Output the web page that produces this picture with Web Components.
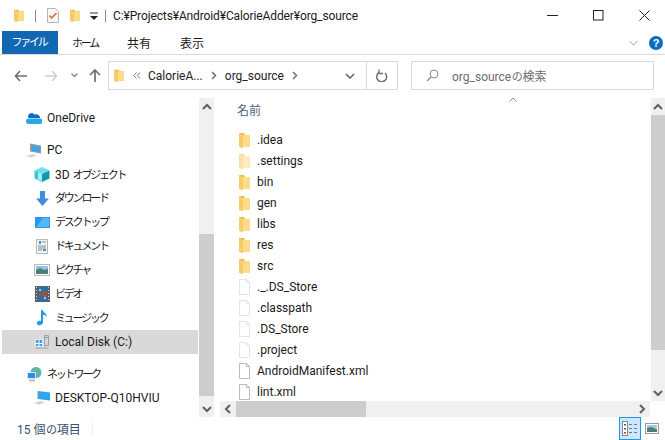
<!DOCTYPE html>
<html>
<head>
<meta charset="utf-8">
<style>
html, body { margin: 0; height: 100%; background: #fff; overflow: hidden; }
body { font: 12px Roboto, "Noto Sans CJK JP", sans-serif; color: #1a1a1a; }
</style>
</head>
<body>
<explorer-window></explorer-window>
<script>
const folder = (w, h, op) => `<svg width="${w}" height="${h}" viewBox="0 0 11 16" preserveAspectRatio="none" style="display:block;flex:none" opacity="${op || 1}"><path d="M0 1h5l1 2h5v11.500H3V16L0 14.500z" fill="#e9bb55"/><path d="M4 3h7v11.500H4z" fill="#fcdc88"/><path d="M0 1l4 2v13l-4-1.500z" fill="#f6cd66"/></svg>`;
const FILE = `<svg width="11" height="16" viewBox="0 0 11 16" style="display:block"><path d="M.5 .5h7l3 3v12H.5z" fill="#fff" stroke="#bdbdbd"/><path d="M7.500 .5v3h3" fill="none" stroke="#bdbdbd"/></svg>`;
const PALE_FILE = `<svg width="11" height="16" viewBox="0 0 11 16" style="display:block"><path d="M.5 .5h7l3 3v12H.5z" fill="#fff" stroke="#e4e4e4"/><path d="M7.500 .5v3h3" fill="none" stroke="#e4e4e4"/></svg>`;

const NAV_ICONS = {
  onedrive: `<svg width="16" height="12" viewBox="0 0 16 12"><path d="M2.500 6a3.500 3.500 0 0 1 6-3.500A4 4 0 0 1 14 6z" fill="#0f6cbd"/><path d="M3 12a2.800 2.800 0 0 1-.5-5.600h11a2.800 2.800 0 0 1 .5 5.600z" fill="#28a8ea"/></svg>`,
  pc: `<svg width="16" height="15" viewBox="0 0 16 15"><path d="M4 .5l11 2v8l-11-2z" fill="#8b9aa8"/><path d="M6 2.500l8 1.400v5.100L6 7.800z" fill="#35a7f2"/><path d="M0 13l6-2 5 1.300-6 2.500z" fill="#d5d8da"/></svg>`,
  cube: `<svg width="16" height="15" viewBox="0 0 16 15"><path d="M8 0l7.500 3.500L8 7 .5 3.500z" fill="#6fe0ec"/><path d="M.5 3.500L8 7v8L.5 11.500z" fill="#3fc5d6"/><path d="M4 5.500L8 7v7L4 12.500z" fill="#a9eef3"/><path d="M15.500 3.500L8 7v8l7.500-3.500z" fill="#0f97ae"/></svg>`,
  down: `<svg width="13" height="15" viewBox="0 0 13 15"><path d="M4 0h5v7.500h4L6.500 15 0 7.500h4z" fill="#3f8fdc"/></svg>`,
  desktop: `<svg width="15" height="11" viewBox="0 0 15 11"><rect x=".5" y=".5" width="14" height="10" fill="#1e9bf0" stroke="#3f8fdc"/><path d="M1 10 8 1h6v9z" fill="#52b6f7"/></svg>`,
  doc: `<svg width="12" height="15" viewBox="0 0 12 15"><path d="M.5 .5h11v14H.5z" fill="#f4f4f4" stroke="#b5b5b5"/><path d="M3 2h2v3H3z" fill="#3f8fdc"/><path d="M6 3h4M2 7h8M2 9h8M2 11h4" stroke="#7d8c99"/><path d="M7 10h3v2H7z" fill="#3f8fdc"/></svg>`,
  picture: `<svg width="16" height="12" viewBox="0 0 16 12"><rect x=".5" y=".5" width="15" height="11" fill="#fff" stroke="#b5bac0"/><path d="M2 2h12v5H2z" fill="#8fc3ea"/><path d="M2 6l4-2 4 2 4-1v5H2z" fill="#4f7f73"/></svg>`,
  video: `<svg width="15" height="16" viewBox="0 0 15 16"><rect width="15" height="16" fill="#5a5f66"/><rect x="3" y="1" width="9" height="14" fill="#2a6fb5"/><path d="M3 8h4l1-3 4 1v4H3z" fill="#a44f2e"/><path d="M4 3h2v2H4zM9 11h2v2H9z" fill="#e6c83c"/><path d="M1.500 1v14M13.500 1v14" stroke="#d5d5d5" stroke-dasharray="1 2"/></svg>`,
  music: `<svg width="12" height="16" viewBox="0 0 12 16"><path d="M5 0h1.500c.5 2.500 4.500 3 4.500 7-1-1.500-2.500-2-4-2.200V12.500C7 15 2 16.500 1 14s2-4 4-3z" fill="#1e9bf0"/></svg>`,
  disk: `<svg width="16" height="16" viewBox="0 0 16 16"><path d="M10.500 1.500h4v10h-4z" fill="#d5d8db" stroke="#9aa1a7"/><path d="M11.500 3.500h2" stroke="#6d767d"/><rect x="1.500" y="5.500" width="7" height="7" fill="#3c9ee6" stroke="#e8e8e8"/><path d="M5 6v7M1 9.500h7" stroke="#fff"/><path d="M1 13h12l2 2H2z" fill="#b8bcc0"/></svg>`,
  network: `<svg width="15" height="15" viewBox="0 0 15 15"><circle cx="9" cy="5.500" r="5.500" fill="#56aee8"/><path d="M6 2l4-2 2 3-3 2zM10 7l3-2 1 2-3 2z" fill="#6bbf59"/><path d="M.5 5.500h8v6h-8z" fill="#2a8fe0" stroke="#dfe7ee"/><path d="M2 13.500h6" stroke="#b8bcc0" stroke-width="2"/></svg>`,
  monitor: `<svg width="16" height="14" viewBox="0 0 16 14"><path d="M4 0l12 1.500v8L4 8z" fill="#2fa4f0"/><path d="M4 0v8" stroke="#8b9aa8"/><path d="M0 12l6-2 5 1.500-6 2.200z" fill="#cfd3d6"/></svg>`
};

class KanaText extends HTMLElement {
  constructor() {
    super();
    this.attachShadow({ mode: 'open' });
    this.shadowRoot.innerHTML = `
<style>
:host { display: inline; font-size: 11px; letter-spacing: -2.200px; margin-right: 2px; margin-bottom: 2px; }
</style>
<slot></slot>`;
  }
}
customElements.define('kana-text', KanaText);

class NavItem extends HTMLElement {
  constructor() {
    super();
    this.attachShadow({ mode: 'open' });
    this.shadowRoot.innerHTML = `
<style>
:host { display: flex; align-items: center; height: 24px; padding-left: var(--indent, 32px); font-size: 12px; white-space: nowrap; }
:host([selected]) { background: #d9d9d9; }
.ic { width: 16px; height: 16px; display: flex; align-items: center; justify-content: center; margin-right: 5px; flex: none; }
</style>
<span class="ic">${NAV_ICONS[this.getAttribute('icon')] || ''}</span><slot></slot>`;
  }
}
customElements.define('nav-item', NavItem);

class FileRow extends HTMLElement {
  constructor() {
    super();
    this.attachShadow({ mode: 'open' });
    const kind = this.getAttribute('kind');
    const icon = { folder: folder(11, 16), 'pale-folder': folder(11, 16, .55), file: FILE, 'pale-file': PALE_FILE }[kind];
    this.shadowRoot.innerHTML = `
<style>
:host { display: flex; align-items: center; height: 21px; font-size: 12px; white-space: nowrap; }
.ic { width: 11px; height: 16px; margin-right: 7px; flex: none; }
</style>
<span class="ic">${icon}</span><slot></slot>`;
  }
}
customElements.define('file-row', FileRow);

class ScrollBar extends HTMLElement {
  constructor() {
    super();
    this.attachShadow({ mode: 'open' });
    const horizontal = this.hasAttribute('horizontal');
    const a = horizontal ? 'M7 1 3 5l4 4' : 'M1 7l4-4 4 4';
    const b = horizontal ? 'M3 1l4 4-4 4' : 'M1 3l4 4 4-4';
    this.shadowRoot.innerHTML = `
<style>
:host { display: flex; flex-direction: ${horizontal ? 'row' : 'column'}; background: #f0f0f0; flex: none; ${horizontal ? 'height: 16px;' : 'width: var(--bar, 15px);'} }
.arrow { ${horizontal ? 'width: 16px;' : 'height: 17px;'} flex: none; display: flex; align-items: center; justify-content: center; }
.arrow svg { display: block; }
.track { flex: 1; display: flex; flex-direction: ${horizontal ? 'row' : 'column'}; }
.before { flex: none; ${horizontal ? 'width' : 'height'}: var(--before, 0); }
.thumb { flex: none; background: #cdcdcd; ${horizontal ? 'width' : 'height'}: var(--thumb, 100px); }
</style>
<span class="arrow"><svg width="10" height="10" viewBox="0 0 10 10"><path d="${a}" fill="none" stroke="#606060" stroke-width="2"/></svg></span>
<div class="track"><div class="before"></div><div class="thumb"></div></div>
<span class="arrow"><svg width="10" height="10" viewBox="0 0 10 10"><path d="${b}" fill="none" stroke="#606060" stroke-width="2"/></svg></span>`;
  }
}
customElements.define('scroll-bar', ScrollBar);

class TitleBar extends HTMLElement {
  constructor() {
    super();
    this.attachShadow({ mode: 'open' });
    this.shadowRoot.innerHTML = `
<style>
:host { display: flex; align-items: center; height: 31px; flex: none; font-size: 12px; padding-left: 14px; }
.q { display: flex; align-items: center; }
.sep { width: 1px; height: 12px; background: #8a8a8a; }
.path { margin-left: 7px; flex: 1; white-space: nowrap; letter-spacing: -.12px; }
.btn { width: 46px; height: 31px; display: flex; align-items: center; justify-content: center; flex: none; }
.btn:last-child { margin-right: -2px; }
svg { display: block; }
</style>
<span class="q">${folder(10, 13)}</span>
<span class="sep" style="margin-left:11px"></span>
<span class="q" style="margin-left:11px"><svg width="12" height="15" viewBox="0 0 12 15"><path d="M.5 .5h8l3 3v11H.5z" fill="#f8f8f8" stroke="#b5b5b5"/><path d="M2.500 7.500l2 2.500 5-5" fill="none" stroke="#e0602a" stroke-width="1.500"/></svg></span>
<span class="q" style="margin-left:11px">${folder(10, 13)}</span>
<span class="q" style="margin-left:9px"><svg width="10" height="8" viewBox="0 0 10 8"><path d="M1 1h8" stroke="#333"/><path d="M1 4h8L5 8z" fill="#222"/></svg></span>
<span class="sep" style="margin-left:6px"></span>
<span class="path">C:¥Projects¥Android¥CalorieAdder¥org_source</span>
<span class="btn"><svg width="11" height="1"><rect width="11" height="1" fill="#222"/></svg></span>
<span class="btn"><svg width="11" height="11"><rect x=".5" y=".5" width="9.500" height="9.500" fill="none" stroke="#222"/></svg></span>
<span class="btn"><svg width="11" height="11"><path d="M.5 .5l10 10M10.500 .5l-10 10" stroke="#222"/></svg></span>`;
  }
}
customElements.define('title-bar', TitleBar);

class RibbonTabs extends HTMLElement {
  constructor() {
    super();
    this.attachShadow({ mode: 'open' });
    this.shadowRoot.innerHTML = `
<style>
:host { display: flex; align-items: center; height: 24px; box-sizing: border-box; flex: none; font-size: 12px; padding-left: 2px; border-bottom: 1px solid #dadada; }
.tab { width: 50px; text-align: center; margin-top: -1px; }
.tab.file { width: 56px; height: 23px; line-height: 23px; background: #1167b1; color: #fff; margin: 0 3px 0 0; }
.gap { flex: 1; }
svg { display: block; }
.help { width: 14px; height: 14px; border-radius: 50%; background: #0f6cbd; color: #fff; font: bold 11px/14px "Liberation Sans", sans-serif; text-align: center; margin: 0 2px 0 11px; }
</style>
<span class="tab file"><kana-text>ファイル</kana-text></span><span class="tab"><kana-text>ホーム</kana-text></span><span class="tab" style="margin-left:3px">共有</span><span class="tab" style="margin-left:3px">表示</span>
<span class="gap"></span>
<svg width="9" height="6" viewBox="0 0 9 6"><path d="M.5 1l4 4 4-4" fill="none" stroke="#9a9a9a"/></svg>
<span class="help">?</span>`;
  }
}
customElements.define('ribbon-tabs', RibbonTabs);

class AddressRow extends HTMLElement {
  constructor() {
    super();
    this.attachShadow({ mode: 'open' });
    const chev = `<svg width="6" height="9" viewBox="0 0 6 9"><path d="M1 1l3.500 3.500L1 8" fill="none" stroke="#707070" stroke-width="1.500"/></svg>`;
    this.shadowRoot.innerHTML = `
<style>
:host { display: flex; align-items: center; height: 29px; margin-top: 6px; flex: none; font-size: 12px; padding: 0 11px 0 0; }
.nav { width: 108px; display: flex; align-items: center; flex: none; padding-left: 14px; box-sizing: border-box; }
.box { border: 1px solid #d9d9d9; height: 29px; box-sizing: border-box; display: flex; align-items: center; }
.addr { width: 290px; flex: none; padding-left: 5px; color: #222; }
.addr .txt { white-space: nowrap; }
.grow { flex: 1; }
.drop { width: 33px; display: flex; justify-content: center; }
.refresh { width: 30px; height: 27px; border-left: 1px solid #d9d9d9; display: flex; align-items: center; justify-content: center; }
.search { width: 243px; flex: none; margin-left: 13px; padding-left: 14px; color: #6d6d6d; white-space: nowrap; }
svg { display: block; flex: none; }
</style>
<div class="nav">
<svg width="14" height="12" viewBox="0 0 14 12"><path d="M6 1 1.500 6 6 11M2 6h11" fill="none" stroke="#6f6f6f" stroke-width="1.600"/></svg>
<svg style="margin-left:16px" width="14" height="12" viewBox="0 0 14 12"><path d="M8 1l4.500 5L8 11M12 6H1" fill="none" stroke="#cfcfcf" stroke-width="1.600"/></svg>
<svg style="margin-left:13px" width="7" height="5" viewBox="0 0 7 5"><path d="M.5 .5l3 3 3-3" fill="none" stroke="#8a8a8a" stroke-width="1.300"/></svg>
<svg style="margin-left:11px" width="12" height="13" viewBox="0 0 12 13"><path d="M1 6l5-5 5 5M6 1v12" fill="none" stroke="#6f6f6f" stroke-width="1.700"/></svg>
</div>
<div class="box addr">
${folder(10, 13)}
<svg style="margin-left:9px" width="8" height="7" viewBox="0 0 8 7"><path d="M3.500 .5 .8 3.500l2.700 3M7 .5 4.300 3.500l2.700 3" fill="none" stroke="#808080"/></svg>
<span class="txt" style="margin-left:7px">CalorieA...</span>
<span style="margin-left:8px">${chev}</span>
<span class="txt" style="margin-left:8px">org_source</span>
<span style="margin-left:8px">${chev}</span>
<span class="grow"></span>
<span class="drop"><svg width="10" height="6" viewBox="0 0 10 6"><path d="M1 1l4 4 4-4" fill="none" stroke="#666" stroke-width="1.600"/></svg></span>
<span class="refresh"><svg width="12" height="13" viewBox="0 0 12 13"><path d="M3 2.500a5 5 0 1 0 6 .5" fill="none" stroke="#707070" stroke-width="1.500" transform="translate(0 1)"/><path d="M3 .5v4h4" fill="none" stroke="#707070" stroke-width="1.300"/></svg></span>
</div>
<div class="box search">
<svg width="13" height="13" viewBox="0 0 13 13"><circle cx="8" cy="5" r="4" fill="none" stroke="#8f8f8f"/><path d="M5 8l-4 4" stroke="#b08a60" stroke-width="1.400"/></svg>
<span style="margin-left:13px">org_source<kana-text>の</kana-text>検索</span>
</div>`;
  }
}
customElements.define('address-row', AddressRow);

class NavPane extends HTMLElement {
  constructor() {
    super();
    this.attachShadow({ mode: 'open' });
    this.shadowRoot.innerHTML = `
<style>
:host { display: flex; width: 214px; flex: none; padding-top: 3px; box-sizing: border-box; }
.list { flex: 1; min-width: 0; padding: 8px 1px 0 2px; }
.top { --indent: 24px; }
.space { height: 8px; }
scroll-bar { --before: 119px; --thumb: 162px; }
</style>
<div class="list">
<nav-item class="top" icon="onedrive">OneDrive</nav-item>
<div class="space"></div>
<nav-item class="top" icon="pc">PC</nav-item>
<nav-item icon="cube"><span>3D <kana-text>オブジェクト</kana-text></span></nav-item>
<nav-item icon="down"><kana-text>ダウンロード</kana-text></nav-item>
<nav-item icon="desktop"><kana-text>デスクトップ</kana-text></nav-item>
<nav-item icon="doc"><kana-text>ドキュメント</kana-text></nav-item>
<nav-item icon="picture"><kana-text>ピクチャ</kana-text></nav-item>
<nav-item icon="video"><kana-text>ビデオ</kana-text></nav-item>
<nav-item icon="music"><kana-text>ミュージック</kana-text></nav-item>
<nav-item icon="disk" selected>Local Disk (C:)</nav-item>
<div class="space"></div>
<nav-item class="top" icon="network"><kana-text>ネットワーク</kana-text></nav-item>
<nav-item icon="monitor">DESKTOP-Q10HVIU</nav-item>
</div>
<scroll-bar></scroll-bar>`;
  }
}
customElements.define('nav-pane', NavPane);

class FileList extends HTMLElement {
  constructor() {
    super();
    this.attachShadow({ mode: 'open' });
    this.shadowRoot.innerHTML = `
<style>
:host { display: flex; flex: 1; min-width: 0; flex-direction: column; position: relative; }
.main { flex: 1; display: flex; min-height: 0; }
.body { flex: 1; min-width: 0; padding: 1px 0 0 25px; }
.head { height: 26px; display: flex; align-items: center; font-size: 12px; color: #4c607a; margin-left: -2px; margin-bottom: 7px; }
.sort { position: absolute; left: 295px; top: 2px; }
scroll-bar.v { --bar: 14px; --before: 0px; --thumb: 235px; margin-top: 3px; }
scroll-bar.h { margin: 0 15px 0 6px; --before: 0px; --thumb: 130px; }
</style>
<svg class="sort" width="8" height="5" viewBox="0 0 8 5"><path d="M.5 4.500 4 1l3.500 3.500" fill="none" stroke="#888"/></svg>
<div class="main">
<div class="body">
<div class="head">名前</div>
<file-row kind="folder">.idea</file-row>
<file-row kind="pale-folder">.settings</file-row>
<file-row kind="folder">bin</file-row>
<file-row kind="folder">gen</file-row>
<file-row kind="folder">libs</file-row>
<file-row kind="folder">res</file-row>
<file-row kind="folder">src</file-row>
<file-row kind="pale-file">._.DS_Store</file-row>
<file-row kind="pale-file">.classpath</file-row>
<file-row kind="pale-file">.DS_Store</file-row>
<file-row kind="pale-file">.project</file-row>
<file-row kind="file">AndroidManifest.xml</file-row>
<file-row kind="file">lint.xml</file-row>
</div>
<scroll-bar class="v"></scroll-bar>
</div>
<scroll-bar class="h" horizontal></scroll-bar>`;
  }
}
customElements.define('file-list', FileList);

class StatusBar extends HTMLElement {
  constructor() {
    super();
    this.attachShadow({ mode: 'open' });
    this.shadowRoot.innerHTML = `
<style>
:host { display: flex; align-items: center; height: 23px; flex: none; font-size: 12px; color: #3a5070; padding-left: 17px; }
.gap { flex: 1; }
.sep { width: 1px; height: 14px; background: #eee; margin-left: 11px; }
.v { width: 22px; height: 23px; box-sizing: border-box; display: flex; align-items: center; justify-content: center; flex: none; }
.v.on { background: #cce8ff; border: 1px solid #1e9bdb; }
.v.thumbs { width: 14px; margin: 0 6px 0 4px; }
svg { display: block; }
</style>
<span>15 個<kana-text>の</kana-text>項目</span><span class="sep"></span><span class="gap"></span>
<span class="v on"><svg width="16" height="15" viewBox="0 0 16 15"><rect x=".5" y=".5" width="5" height="14" fill="#fff" stroke="#888"/><path d="M2 3h2v1.500H2zM2 7h2v1.500H2z" fill="#555"/><path d="M2 11h2v1.500H2z" fill="#c33"/><path d="M7 3.500h3M12 3.500h3M7 7.500h3M12 7.500h3M7 11.500h3M12 11.500h3" stroke="#777"/></svg></span>
<span class="v thumbs"><svg width="14" height="11" viewBox="0 0 14 11"><rect x=".5" y=".5" width="13" height="10" fill="#fff" stroke="#9a9a9a"/><path d="M2 2h10v3H2z" fill="#9ec9e6"/><path d="M2 5l4-1 6 2v3H2z" fill="#4f7f73"/></svg></span>`;
  }
}
customElements.define('status-bar', StatusBar);

class ExplorerWindow extends HTMLElement {
  constructor() {
    super();
    this.attachShadow({ mode: 'open' });
    this.shadowRoot.innerHTML = `
<style>
:host { display: flex; flex-direction: column; height: 440px; width: 665px; background: #fff; overflow: hidden; }
.content { flex: 1; display: flex; min-height: 0; margin-top: 5px; }
</style>
<title-bar></title-bar>
<ribbon-tabs></ribbon-tabs>
<address-row></address-row>
<div class="content"><nav-pane></nav-pane><file-list></file-list></div>
<status-bar></status-bar>`;
  }
}
customElements.define('explorer-window', ExplorerWindow);
</script>
</body>
</html>
